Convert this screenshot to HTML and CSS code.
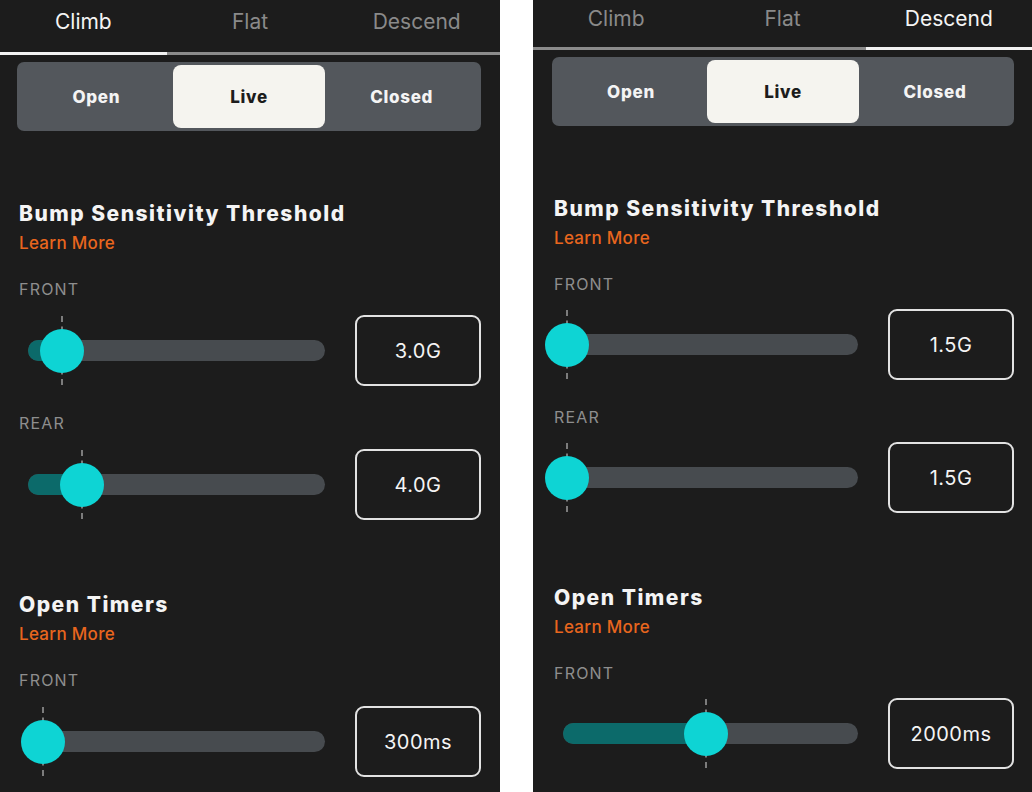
FILE: index.html
```html
<!DOCTYPE html>
<html lang="en">
<head>
    <meta charset="UTF-8">
    <meta name="viewport" content="width=device-width, initial-scale=1.0">
    <title>Suspension Modes</title>
    <link rel="stylesheet" href="styles.css">
</head>
<body>
    <div class="screens">

        <!-- Climb -->
        <section class="panel">
            <nav class="tabs">
                <a class="tab active">Climb</a>
                <a class="tab">Flat</a>
                <a class="tab">Descend</a>
            </nav>

            <div class="content">
                <div class="mode-switch">
                    <span class="mode">Open</span>
                    <span class="mode selected">Live</span>
                    <span class="mode">Closed</span>
                </div>

                <div class="group">
                    <h2 class="group-title">Bump Sensitivity Threshold</h2>
                    <a class="learn-more">Learn More</a>

                    <div class="setting">
                        <div class="setting-label">FRONT</div>
                        <div class="setting-row">
                            <div class="slider">
                                <div class="slider-track"><div class="slider-fill" style="width: 34px"></div></div>
                                <div class="slider-knob" style="left: 43px"></div>
                            </div>
                            <div class="value-box">3.0G</div>
                        </div>
                    </div>

                    <div class="setting">
                        <div class="setting-label">REAR</div>
                        <div class="setting-row">
                            <div class="slider">
                                <div class="slider-track"><div class="slider-fill" style="width: 54px"></div></div>
                                <div class="slider-knob" style="left: 63px"></div>
                            </div>
                            <div class="value-box">4.0G</div>
                        </div>
                    </div>
                </div>

                <div class="group">
                    <h2 class="group-title">Open Timers</h2>
                    <a class="learn-more">Learn More</a>

                    <div class="setting">
                        <div class="setting-label">FRONT</div>
                        <div class="setting-row">
                            <div class="slider">
                                <div class="slider-track"><div class="slider-fill" style="width: 15px"></div></div>
                                <div class="slider-knob" style="left: 24px"></div>
                            </div>
                            <div class="value-box">300ms</div>
                        </div>
                    </div>
                </div>
            </div>
        </section>

        <!-- Descend -->
        <section class="panel panel-second">
            <nav class="tabs">
                <a class="tab">Climb</a>
                <a class="tab">Flat</a>
                <a class="tab active">Descend</a>
            </nav>

            <div class="content">
                <div class="mode-switch">
                    <span class="mode">Open</span>
                    <span class="mode selected">Live</span>
                    <span class="mode">Closed</span>
                </div>

                <div class="group">
                    <h2 class="group-title">Bump Sensitivity Threshold</h2>
                    <a class="learn-more">Learn More</a>

                    <div class="setting">
                        <div class="setting-label">FRONT</div>
                        <div class="setting-row">
                            <div class="slider">
                                <div class="slider-track"><div class="slider-fill" style="width: 5px"></div></div>
                                <div class="slider-knob" style="left: 13px"></div>
                            </div>
                            <div class="value-box">1.5G</div>
                        </div>
                    </div>

                    <div class="setting">
                        <div class="setting-label">REAR</div>
                        <div class="setting-row">
                            <div class="slider">
                                <div class="slider-track"><div class="slider-fill" style="width: 5px"></div></div>
                                <div class="slider-knob" style="left: 13px"></div>
                            </div>
                            <div class="value-box">1.5G</div>
                        </div>
                    </div>
                </div>

                <div class="group">
                    <h2 class="group-title">Open Timers</h2>
                    <a class="learn-more">Learn More</a>

                    <div class="setting">
                        <div class="setting-label">FRONT</div>
                        <div class="setting-row">
                            <div class="slider">
                                <div class="slider-track"><div class="slider-fill" style="width: 144px"></div></div>
                                <div class="slider-knob" style="left: 152px"></div>
                            </div>
                            <div class="value-box">2000ms</div>
                        </div>
                    </div>
                </div>
            </div>
        </section>

    </div>
</body>
</html>
```

FILE: styles.css
```css
body {
    margin: 0;
    background: #ffffff;
    font-family: Inter, "Liberation Sans", sans-serif;
    color: #f2f2f2;
}

.screens {
    display: flex;
    gap: 33px;
    height: 792px;
    overflow: hidden;
}

.panel {
    width: 500px;
    background: #1c1c1c;
    overflow: hidden;
}
.panel-second {
    width: 499px;
    margin-top: -5px; /* the second capture sits a bit higher */
}

/* Tabs */
.tabs {
    display: flex;
    height: 52px;
    border-bottom: 3px solid #8b8b8b;
}
.tab {
    flex: 1;
    display: flex;
    align-items: center;
    justify-content: center;
    padding-bottom: 10px;
    font-size: 21px;
    color: #8a8a8a;
    margin-bottom: -3px;
    border-bottom: 3px solid transparent;
}
.panel-second .tab {
    padding-bottom: 6px;
}
.tab.active {
    color: #f4f4f4;
    border-bottom-color: #f2f2f2;
}

.content {
    padding: 7px 19px 0 19px;
}
.panel-second .content {
    padding: 7px 18px 0 21px;
}

/* Open / Live / Closed */
.mode-switch {
    display: flex;
    height: 69px;
    padding: 3px;
    box-sizing: border-box;
    background: #53575c;
    border-radius: 7px;
    margin-left: -2px;
}
.mode {
    flex: 1;
    display: flex;
    align-items: center;
    justify-content: center;
    font-size: 17px;
    font-weight: 800;
    letter-spacing: 0.7px;
    color: #f4f4f4;
    border-radius: 8px;
}
.mode.selected {
    background: #f5f4ef;
    color: #1c1c1c;
}

/* Groups */
.group {
    display: flex;
    flex-direction: column;
    padding-top: 70px;
}
.group + .group {
    padding-top: 72px;
}
.group-title {
    margin: 0;
    font-size: 21px;
    line-height: 26px;
    font-weight: 800;
    letter-spacing: 1.5px;
    color: #f4f4f4;
}
.learn-more {
    margin-top: 5px;
    font-size: 17px;
    line-height: 22px;
    font-weight: 500;
    letter-spacing: 0.3px;
    color: #e8661e;
}

.setting {
    margin-top: 25px;
}
.setting + .setting {
    margin-top: 27px;
}
.setting-label {
    font-size: 16px;
    line-height: 20px;
    letter-spacing: 1.2px;
    color: #8e8e8e;
}
.setting-row {
    display: flex;
    align-items: center;
    margin-top: 16px;
}
.panel-second .setting-row {
    margin-top: 15px;
}

/* Slider */
.slider {
    position: relative;
    flex: 1;
    height: 71px;
    margin-right: 30px;
    display: flex;
    align-items: center;
}
.slider-track {
    flex: 1;
    height: 21px;
    margin-left: 9px;
    border-radius: 11px;
    background: #474b4f;
    overflow: hidden;
}
.slider-fill {
    height: 100%;
    background: #0c6a6a;
}
.slider-knob {
    position: absolute;
    top: 1px;
    width: 0;
    height: 69px;
    margin-left: -1px;
    border-left: 2px dashed #7c7c7c;
}
.slider-knob::after {
    content: "";
    position: absolute;
    top: 13px;
    left: -23px;
    width: 44px;
    height: 44px;
    border-radius: 50%;
    background: #0ed4d4;
}

.value-box {
    width: 126px;
    height: 71px;
    box-sizing: border-box;
    border: 2px solid #e2e2e2;
    border-radius: 9px;
    display: flex;
    align-items: center;
    justify-content: center;
    font-size: 20px;
    letter-spacing: 0.5px;
    color: #f4f4f4;
}
```
